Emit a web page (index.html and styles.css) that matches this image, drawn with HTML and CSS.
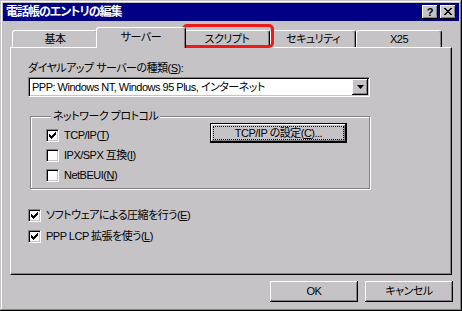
FILE: index.html
```html
<!DOCTYPE html>
<html lang="ja">
  <head>
    <meta charset="utf-8" />
    <title>電話帳のエントリの編集</title>
    <link rel="stylesheet" href="styles.css">
  </head>
  <body>
    <div class="window">
      <!-- Title bar -->
      <div class="title-bar">
        <span class="title-text">電話帳のエントリの編集</span>
        <div class="title-buttons">
          <button class="title-btn help">?</button>
          <button class="title-btn close">
            <svg width="8" height="7" viewBox="0 0 8 7"><path d="M0 0h2v1H0zM6 0h2v1H6zM1 1h2v1H1zM5 1h2v1H5zM2 2h4v1H2zM3 3h2v1H3zM2 4h4v1H2zM1 5h2v1H1zM5 5h2v1H5zM0 6h2v1H0zM6 6h2v1H6z" fill="#000"/></svg>
          </button>
        </div>
      </div>

      <!-- Tabs -->
      <div class="tabs">
        <div class="tab">基本</div>
        <div class="tab active">サーバー</div>
        <div class="tab marked">スクリプト<span class="mark"></span></div>
        <div class="tab">セキュリティ</div>
        <div class="tab">X25</div>
      </div>

      <div class="panel">
        <div class="field-label">ダイヤルアップ サーバーの種類(<u>S</u>):</div>
        <div class="select">
          <span class="select-value">PPP: Windows NT, Windows 95 Plus, インターネット</span>
          <span class="select-arrow">
            <svg width="7" height="4" viewBox="0 0 7 4"><path d="M0 0h7L3.5 4z" fill="#000"/></svg>
          </span>
        </div>

        <fieldset class="group">
          <legend>ネットワーク プロトコル</legend>
          <div class="group-body">
            <div class="check-list">
              <label class="check"><span class="box"><svg width="7" height="7" viewBox="0 0 7 7"><path d="M0 2h1v3H0zM1 3h1v3H1zM2 4h1v3H2zM3 3h1v3H3zM4 2h1v3H4zM5 1h1v3H5zM6 0h1v3H6z" fill="#000"/></svg></span><span>TCP/IP(<u>T</u>)</span></label>
              <label class="check"><span class="box"></span><span>IPX/SPX 互換(<u>I</u>)</span></label>
              <label class="check"><span class="box"></span><span>NetBEUI(<u>N</u>)</span></label>
            </div>
            <button class="btn default"><span class="focus">TCP/IP の設定(<u>C</u>)...</span></button>
          </div>
        </fieldset>

        <div class="options">
          <label class="check"><span class="box"><svg width="7" height="7" viewBox="0 0 7 7"><path d="M0 2h1v3H0zM1 3h1v3H1zM2 4h1v3H2zM3 3h1v3H3zM4 2h1v3H4zM5 1h1v3H5zM6 0h1v3H6z" fill="#000"/></svg></span><span>ソフトウェアによる圧縮を行う(<u>E</u>)</span></label>
          <label class="check"><span class="box"><svg width="7" height="7" viewBox="0 0 7 7"><path d="M0 2h1v3H0zM1 3h1v3H1zM2 4h1v3H2zM3 3h1v3H3zM4 2h1v3H4zM5 1h1v3H5zM6 0h1v3H6z" fill="#000"/></svg></span><span>PPP LCP 拡張を使う(<u>L</u>)</span></label>
        </div>
      </div>

      <div class="actions">
        <button class="btn">OK</button>
        <button class="btn">キャンセル</button>
      </div>
    </div>
  </body>
</html>
```

FILE: styles.css
```css
/* Win95 style dialog */
* {
  box-sizing: border-box;
}

html,
body {
  margin: 0;
}

body {
  background: #c6c3c6;
  font: 11px/13px "Liberation Sans", "Noto Sans CJK JP", sans-serif;
  font-feature-settings: "palt";
  letter-spacing: -0.5px;
  color: #000;
}

u {
  text-decoration: underline;
  text-underline-offset: 1px;
}

.window {
  width: 462px;
  height: 311px;
  padding: 3px;
  background: #c6c3c6;
  box-shadow: inset -1px -1px #000, inset 1px 1px #c6c3c6, inset -2px -2px #848284, inset 2px 2px #fff;
  display: flex;
  flex-direction: column;
}

/* Title bar */
.title-bar {
  height: 18px;
  background: #000084;
  color: #fff;
  display: flex;
  align-items: center;
  justify-content: space-between;
  padding: 0 3px 0 3px;
}

.title-text {
  font-size: 12px;
  font-weight: bold;
  line-height: 14px;
  letter-spacing: -1px;
}

.title-buttons {
  display: flex;
  gap: 2px;
}

.title-btn {
  width: 16px;
  height: 14px;
  padding: 0;
  border: none;
  background: #c6c3c6;
  box-shadow: inset -1px -1px #000, inset 1px 1px #fff, inset -2px -2px #848284;
  display: flex;
  align-items: center;
  justify-content: center;
  font: bold 11px/11px "Liberation Sans", sans-serif;
  letter-spacing: 0;
  color: #000;
}

.title-btn svg {
  margin-top: -1px;
}

/* Tabs */
.tabs {
  display: flex;
  align-items: flex-end;
  height: 20px;
  margin: 6px 0 0 9px;
}

.tab {
  width: 86px;
  height: 17px;
  line-height: 17px;
  text-align: center;
  border-top: 1px solid #fff;
  border-left: 1px solid #fff;
  border-right: 1px solid #000;
  border-radius: 3px 3px 0 0;
  box-shadow: inset -1px 0 #848284;
}

.tab.active {
  position: relative;
  z-index: 1;
  width: 90px;
  height: 21px;
  margin: 0 -2px -1px;
  padding-top: 1px;
  background: #c6c3c6;
}

.tab.marked {
  position: relative;
}

.mark {
  position: absolute;
  top: -7px;
  left: -3px;
  right: -5px;
  bottom: -1px;
  border: 3px solid #f01818;
  border-radius: 5px;
}

/* Panel */
.panel {
  height: 228px;
  margin: 0 7px;
  padding: 14px 0 0 17px;
  border-top: 1px solid #fff;
  border-left: 1px solid #fff;
  border-right: 1px solid #000;
  border-bottom: 1px solid #000;
  box-shadow: inset -1px -1px #848284;
}

.field-label {
  height: 13px;
}

.select {
  width: 342px;
  height: 20px;
  margin-top: 2px;
  background: #fff;
  border-top: 1px solid #848284;
  border-left: 1px solid #848284;
  border-right: 1px solid #fff;
  border-bottom: 1px solid #fff;
  box-shadow: inset 1px 1px #000, inset -1px -1px #c6c3c6;
  display: flex;
  align-items: center;
  justify-content: space-between;
  padding: 1px 1px 1px 3px;
}

.select-arrow {
  width: 16px;
  height: 16px;
  background: #c6c3c6;
  box-shadow: inset -1px -1px #000, inset 1px 1px #fff, inset -2px -2px #848284;
  display: flex;
  align-items: center;
  justify-content: center;
}

.group {
  width: 340px;
  margin: 13px 0 0 2px;
  padding: 2px 0 3px 15px;
  border: 1px solid #848284;
  box-shadow: 1px 1px #fff, inset 1px 1px #fff;
}

.group legend {
  margin-left: 5px;
  padding: 0 2px;
  background: #c6c3c6;
  line-height: 13px;
}

.group-body {
  display: flex;
  align-items: flex-start;
}

.check-list {
  width: 164px;
  display: flex;
  flex-direction: column;
}

.check {
  height: 20px;
  display: flex;
  align-items: center;
  gap: 5px;
}

.box {
  width: 13px;
  height: 13px;
  flex: none;
  background: #fff;
  border-top: 1px solid #848284;
  border-left: 1px solid #848284;
  border-right: 1px solid #fff;
  border-bottom: 1px solid #fff;
  box-shadow: inset 1px 1px #000, inset -1px -1px #c6c3c6;
  display: flex;
  align-items: center;
  justify-content: center;
}

.options {
  margin-top: 16px;
  display: flex;
  flex-direction: column;
}

.options .check {
  height: 21px;
}

/* Buttons */
.btn {
  width: 88px;
  height: 21px;
  padding: 0;
  border: none;
  background: #c6c3c6;
  box-shadow: inset -1px -1px #000, inset 1px 1px #fff, inset -2px -2px #848284;
  font: inherit;
  font-feature-settings: "palt";
  letter-spacing: inherit;
  color: #000;
}

.btn.default {
  width: 137px;
  height: 20px;
  margin-top: -2px;
  border: 1px solid #000;
  padding: 2px;
}

.focus {
  display: block;
  height: 100%;
  line-height: 12px;
  border: 1px dotted #000;
}

.actions {
  display: flex;
  justify-content: flex-end;
  gap: 7px;
  margin: 6px 6px 0 0;
}
```
